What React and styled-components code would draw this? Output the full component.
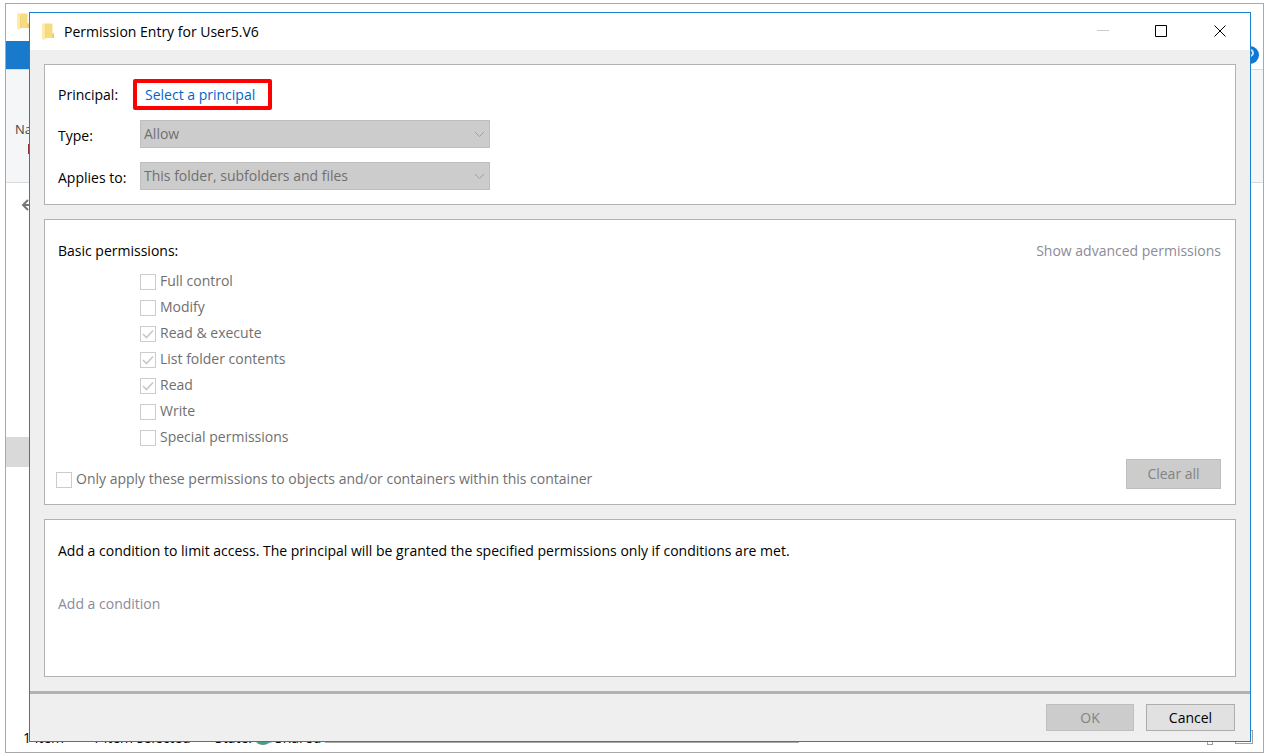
import React from "react";
import styled, { createGlobalStyle } from "styled-components";

const GlobalStyle = createGlobalStyle`
  *, *::before, *::after { box-sizing: border-box; }
  body {
    margin: 0;
    background: #fff;
    color: #000;
    font: 14px/20px "Open Sans", "Noto Sans", sans-serif;
  }
  button, select, input { font: inherit; margin: 0; }
`;

/* The dialog is stacked over the Explorer window in one grid cell. */
const Desktop = styled.div`
  display: grid;
  grid-template: minmax(0, 1fr) / minmax(0, 1fr);
  min-height: 100vh;
  padding: 3px 5px 2px;
`;

const Explorer = styled.div`
  grid-area: 1 / 1;
  display: flex;
  flex-direction: column;
  border: 1px solid #a9a9a9;
  background: #fff;
  overflow: hidden;
`;

const ExplorerTitle = styled.div`
  height: 37px;
  padding: 9px 11px;
`;

const ExplorerTabs = styled.div`
  display: flex;
  align-items: center;
  justify-content: space-between;
  height: 28px;
  padding-right: 4px;
`;

const FileTab = styled.div`
  width: 60px;
  height: 28px;
  background: #1979ca;
`;

const Ribbon = styled.div`
  height: 114px;
  padding: 49px 9px 0;
  border: solid #dadbdc;
  border-width: 1px 0;
  background: #f5f6f7;
  color: #444;
  font-size: 13px;
`;

const RibbonMark = styled.div`
  width: 4px;
  height: 10px;
  margin: 5px 0 0 13px;
  background: #8f3340;
`;

const AddressBar = styled.div`
  flex: 1;
  padding: 14px 15px;
`;

const TreeSelection = styled.div`
  height: 30px;
  width: 60px;
  background: #d9d9d9;
`;

const TreeRest = styled.div`
  height: 261px;
`;

const StatusBar = styled.div`
  display: flex;
  align-items: flex-start;
  height: 24px;
  padding: 0 10px 0 17px;
`;

const StatusText = styled.span`
  width: ${(p) => p.$width}px;
  white-space: nowrap;
`;

const StatusLine = styled.div`
  width: 474px;
  height: 15px;
  border-bottom: 1px solid #a9a9a9;
`;

const ViewButtons = styled.div`
  display: flex;
  gap: 22px;
  margin-left: auto;
  padding-top: 2px;
`;

const ViewBox = styled.span`
  width: ${(p) => p.$width}px;
  height: ${(p) => p.$height}px;
  border: 1px solid #a0a0a0;
`;

const Dialog = styled.div`
  grid-area: 1 / 1;
  z-index: 1;
  display: flex;
  flex-direction: column;
  margin: 9px 13px 11px 24px;
  border: 1px solid #1a80d0;
  background: #efefef;
`;

const TitleBar = styled.header`
  display: flex;
  align-items: center;
  height: 37px;
  padding-left: 12px;
  background: #fff;
`;

const Title = styled.h1`
  flex: 1;
  margin: 0 0 0 8px;
  font: inherit;
`;

const WindowButton = styled.button`
  display: grid;
  place-items: center;
  width: 59px;
  height: 37px;
  padding: 0;
  border: 0;
  background: none;
`;

const Body = styled.main`
  flex: 1;
  display: flex;
  flex-direction: column;
  gap: 14px;
  padding: 14px;
`;

const Panel = styled.section`
  flex: ${(p) => (p.$grow ? "1 0 auto" : "none")};
  min-height: ${(p) => p.$height}px;
  padding: ${(p) => p.$top}px 14px 12px 13px;
  border: 1px solid #b2b2b2;
  background: #fff;
`;

const Field = styled.div`
  display: grid;
  grid-template-columns: 82px 350px;
  align-items: center;
  margin-top: ${(p) => p.$gap || 0}px;
`;

const FieldLabel = styled.label`
  padding-top: 4px;
`;

const Highlight = styled.div`
  justify-self: start;
  display: flex;
  align-items: center;
  width: 139px;
  height: 31px;
  margin-left: -7px;
  padding: 0 8px;
  border: 4px solid #fe0000;
  border-radius: 2px;
`;

const Link = styled.a`
  color: ${(p) => (p.$muted ? "#8b8b99" : "#0066cc")};
  text-decoration: none;
`;

const SelectBox = styled.div`
  display: grid;
  align-items: center;
  & > * { grid-area: 1 / 1; }
  & > svg { justify-self: end; margin-right: 5px; }
`;

const Select = styled.select`
  appearance: none;
  width: 100%;
  height: 28px;
  padding: 0 24px 0 3px;
  border: 1px solid #bfbfbf;
  border-radius: 0;
  background: #ccc;
  color: #707070;
  opacity: 1;
`;

const SplitRow = styled.div`
  display: flex;
  justify-content: space-between;
  align-items: flex-start;
`;

const CheckList = styled.div`
  display: flex;
  flex-direction: column;
  padding: 7px 0 9px 82px;
`;

const CheckLabel = styled.label`
  display: flex;
  gap: 4px;
  height: 26px;
  padding-top: 3px;
  color: #707070;
`;

const CheckBox = styled.span`
  display: grid;
  place-items: center;
  width: 16px;
  height: 16px;
  margin-top: 3px;
  & > * { grid-area: 1 / 1; }
`;

const CheckInput = styled.input`
  appearance: none;
  width: 16px;
  height: 16px;
  border: 1px solid #ccc;
  background: #fff;
`;

const Scope = styled.div`
  margin: 7px 0 0 -2px;
`;

const Button = styled.button`
  width: ${(p) => p.$width}px;
  height: ${(p) => p.$height}px;
  padding: 0;
  border: 1px solid #adadad;
  background: #e1e1e1;
  color: #000;
  &:disabled {
    border-color: #bfbfbf;
    background: #ccc;
    color: #838383;
  }
`;

const Text = styled.p`
  margin: 0 0 33px;
`;

const Footer = styled.footer`
  display: flex;
  justify-content: flex-end;
  gap: 12px;
  padding: 10px 15px;
  border-top: 3px solid #b2b2b2;
`;

const FolderIcon = () => (
  <svg width="14" height="18" viewBox="0 0 14 18" aria-hidden="true">
    <path d="M2 .5h8.500v10H12v4.500H2z" fill="#f7db80" />
    <path d="M10.500 10.500H12v4.500h-1.500z" fill="#eec95e" />
    <path d="M0 .5h1.500L3.500 2.500v13L2.500 17.300L0 15.500z" fill="#ffeaa8" />
    <path d="M3.500 3v12" stroke="#f0cf6c" strokeWidth=".7" />
  </svg>
);

const Chevron = () => (
  <svg width="11" height="7" viewBox="0 0 11 7" fill="none" stroke="#a0a0a0" aria-hidden="true">
    <path d="M1 1l4.500 4.500L10 1" />
  </svg>
);

const Dropdown = ({ id, label, value, gap }) => (
  <Field $gap={gap}>
    <FieldLabel htmlFor={id}>{label}</FieldLabel>
    <SelectBox>
      <Select id={id} disabled>
        <option>{value}</option>
      </Select>
      <Chevron />
    </SelectBox>
  </Field>
);

const Check = ({ label, checked }) => (
  <CheckLabel>
    <CheckBox>
      <CheckInput type="checkbox" checked={!!checked} readOnly disabled />
      {checked && (
        <svg width="12" height="10" viewBox="0 0 12 10" fill="none" stroke="#c8c8c8" strokeWidth="1.600" aria-hidden="true">
          <path d="M1 5l3.500 3.500L11 1.500" />
        </svg>
      )}
    </CheckBox>
    {label}
  </CheckLabel>
);

const permissions = [
  ["Full control", false],
  ["Modify", false],
  ["Read & execute", true],
  ["List folder contents", true],
  ["Read", true],
  ["Write", false],
  ["Special permissions", false],
];

export default function App() {
  return (
    <>
      <GlobalStyle />
      <Desktop>
        <Explorer aria-hidden="true">
          <ExplorerTitle><FolderIcon /></ExplorerTitle>
          <ExplorerTabs>
            <FileTab />
            <svg width="18" height="18" viewBox="0 0 18 18">
              <circle cx="9" cy="9" r="9" fill="#0f78d4" />
              <path d="M6 7a3 3 0 1 1 4 2.800Q9 10.500 9 12" fill="none" stroke="#cfe6fa" strokeWidth="1.800" />
            </svg>
          </ExplorerTabs>
          <Ribbon>
            Na
            <RibbonMark />
          </Ribbon>
          <AddressBar>
            <svg width="14" height="14" viewBox="0 0 14 14" fill="none" stroke="#777" strokeWidth="2">
              <path d="M7 2L2 7l5 5M2 7h12" />
            </svg>
          </AddressBar>
          <TreeSelection />
          <TreeRest />
          <StatusBar>
            <StatusText $width={69}>1 item</StatusText>
            <StatusText $width={123}>1 item selected</StatusText>
            <StatusText $width={40}>State:</StatusText>
            <svg width="20" height="17" viewBox="0 0 20 17">
              <ellipse cx="8" cy="11" rx="8" ry="6" fill="#4f9a80" />
              <ellipse cx="14" cy="10" rx="6" ry="5" fill="#5b9bd0" />
            </svg>
            <StatusText $width={50}>Shared</StatusText>
            <StatusLine />
            <ViewButtons>
              <ViewBox $width={6} $height={15} />
              <ViewBox $width={18} $height={14} />
            </ViewButtons>
          </StatusBar>
        </Explorer>

        <Dialog role="dialog" aria-labelledby="dialog-title">
          <TitleBar>
            <FolderIcon />
            <Title id="dialog-title">Permission Entry for User5.V6</Title>
            <WindowButton aria-label="Minimize" disabled>
              <svg width="13" height="13" viewBox="0 0 13 13" stroke="#ccc"><path d="M1 5.500h12" /></svg>
            </WindowButton>
            <WindowButton aria-label="Maximize">
              <svg width="13" height="13" viewBox="0 0 13 13" fill="none" stroke="#000"><path d="M.5 .5h11v11H.5z" /></svg>
            </WindowButton>
            <WindowButton aria-label="Close">
              <svg width="13" height="13" viewBox="0 0 13 13" stroke="#000"><path d="M.5 .5l11 11M11.500 .5l-11 11" /></svg>
            </WindowButton>
          </TitleBar>

          <Body>
            <Panel $height={141} $top={14}>
              <Field>
                <span>Principal:</span>
                <Highlight><Link href="#principal">Select a principal</Link></Highlight>
              </Field>
              <Dropdown id="type" label="Type:" value="Allow" gap={10} />
              <Dropdown id="applies" label="Applies to:" value="This folder, subfolders and files" gap={14} />
            </Panel>

            <Panel $height={286} $top={21}>
              <SplitRow>
                <span>Basic permissions:</span>
                <Link $muted href="#advanced" aria-disabled="true">Show advanced permissions</Link>
              </SplitRow>
              <CheckList>
                {permissions.map(([label, checked]) => (
                  <Check key={label} label={label} checked={checked} />
                ))}
              </CheckList>
              <SplitRow>
                <Scope>
                  <Check label="Only apply these permissions to objects and/or containers within this container" />
                </Scope>
                <Button $width={95} $height={30} disabled>Clear all</Button>
              </SplitRow>
            </Panel>

            <Panel $height={158} $top={21} $grow>
              <Text>Add a condition to limit access. The principal will be granted the specified permissions only if conditions are met.</Text>
              <Link $muted href="#condition" aria-disabled="true">Add a condition</Link>
            </Panel>
          </Body>

          <Footer>
            <Button $width={88} $height={27} disabled>OK</Button>
            <Button $width={89} $height={27}>Cancel</Button>
          </Footer>
        </Dialog>
      </Desktop>
    </>
  );
}
